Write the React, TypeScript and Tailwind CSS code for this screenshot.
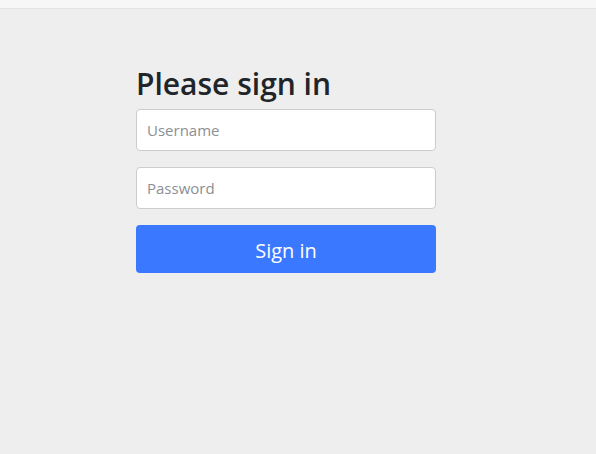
import React from "react";

export default function App() {
  return (
    <div className="min-h-[454px] w-full bg-[#eeeeee]" style={{ fontFamily: '"Open Sans", "Noto Sans", sans-serif' }}>
      <div className="h-[9px] border-b border-[#e5e5e5] bg-[#f7f7f7]" />
      <div className="pl-[136px] pt-[57px]">
        <form className="flex w-[300px] flex-col">
          <h2 className="mb-[7px] text-[30px] font-semibold leading-[36px] text-[#212529]">Please sign in</h2>
          <input
            className="h-[42px] w-full rounded-[4px] border border-[#cccccc] bg-white px-[10px] text-[15px] text-[#212529] placeholder:text-[#8a8f95] outline-none"
            placeholder="Username"
          />
          <input
            className="mt-[16px] h-[42px] w-full rounded-[4px] border border-[#cccccc] bg-white px-[10px] text-[15px] text-[#212529] placeholder:text-[#8a8f95] outline-none"
            placeholder="Password"
            type="password"
          />
          <button
            type="button"
            className="mt-[16px] h-[48px] w-full rounded-[4px] bg-[#3a78ff] pt-[3px] text-[20px] text-white"
          >
            Sign in
          </button>
        </form>
      </div>
    </div>
  );
}
